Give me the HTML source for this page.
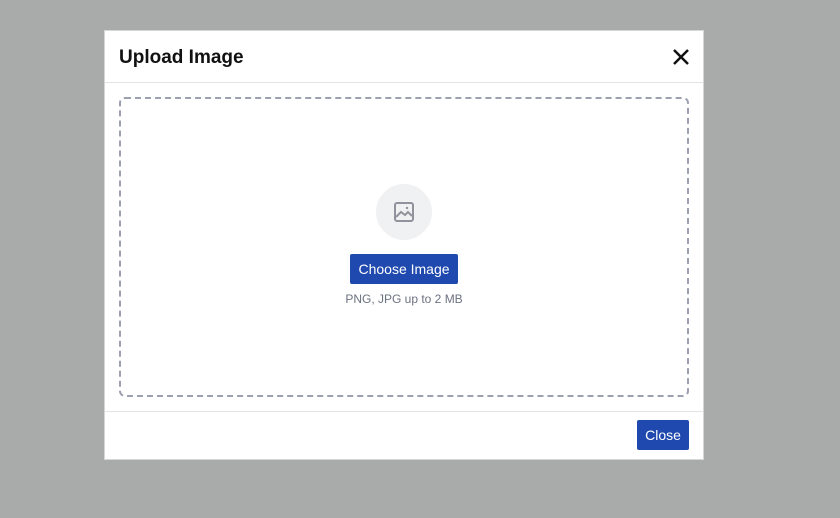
<!DOCTYPE html>
<html><head><style>
*{box-sizing:border-box;margin:0;padding:0}
body{width:840px;height:518px;background:#a9abaa;font-family:"Liberation Sans",sans-serif;position:relative;overflow:hidden}
.m{position:absolute;left:104px;top:30px;width:600px;height:430px;background:#fff;border:1px solid #d6d6d6}
.h{height:52px;border-bottom:1px solid #e2e4e8;position:relative}
.h h1{position:absolute;left:14px;top:16px;font-size:19px;font-weight:bold;color:#111}
.x{position:absolute;left:567px;top:17px}
.d{position:absolute;left:14px;top:66px;width:570px;height:300px;border:2px dashed #9ca0b0;border-radius:6px}
.c{position:absolute;left:271px;top:153px;width:56px;height:56px;border-radius:50%;background:#f0f1f3}
.b{position:absolute;left:245px;top:223px;width:108px;height:30px;background:#1f49ae;color:#fff;font-size:14px;line-height:30px;text-align:center;border-radius:2px}
.t{position:absolute;left:0;width:598px;top:261px;text-align:center;font-size:12px;color:#6b7280}
.f{position:absolute;left:0;top:380px;width:598px;border-top:1px solid #e2e4e8}
.cl{position:absolute;left:532px;top:389px;width:52px;height:30px;background:#1f49ae;color:#fff;font-size:14px;line-height:30px;text-align:center;border-radius:2px}
</style></head><body>
<div class="m">
<div class="h"><h1>Upload Image</h1>
<svg class="x" width="18" height="18" viewBox="0 0 18 18"><path d="M2 2L16 16M16 2L2 16" stroke="#111" stroke-width="2.5"/></svg></div>
<div class="d"></div>
<div class="c"><svg width="56" height="56" viewBox="0 0 56 56"><rect x="19" y="19" width="18" height="18" rx="2" fill="none" stroke="#8f949c" stroke-width="2"/><path d="M20 33l5-5 4 3 3-3 4 4" fill="none" stroke="#8f949c" stroke-width="2"/><circle cx="31" cy="24" r="1.2" fill="#8f949c"/></svg></div>
<div class="b">Choose Image</div>
<div class="t">PNG, JPG up to 2 MB</div>
<div class="f"></div>
<div class="cl">Close</div>
</div>
</body></html>
